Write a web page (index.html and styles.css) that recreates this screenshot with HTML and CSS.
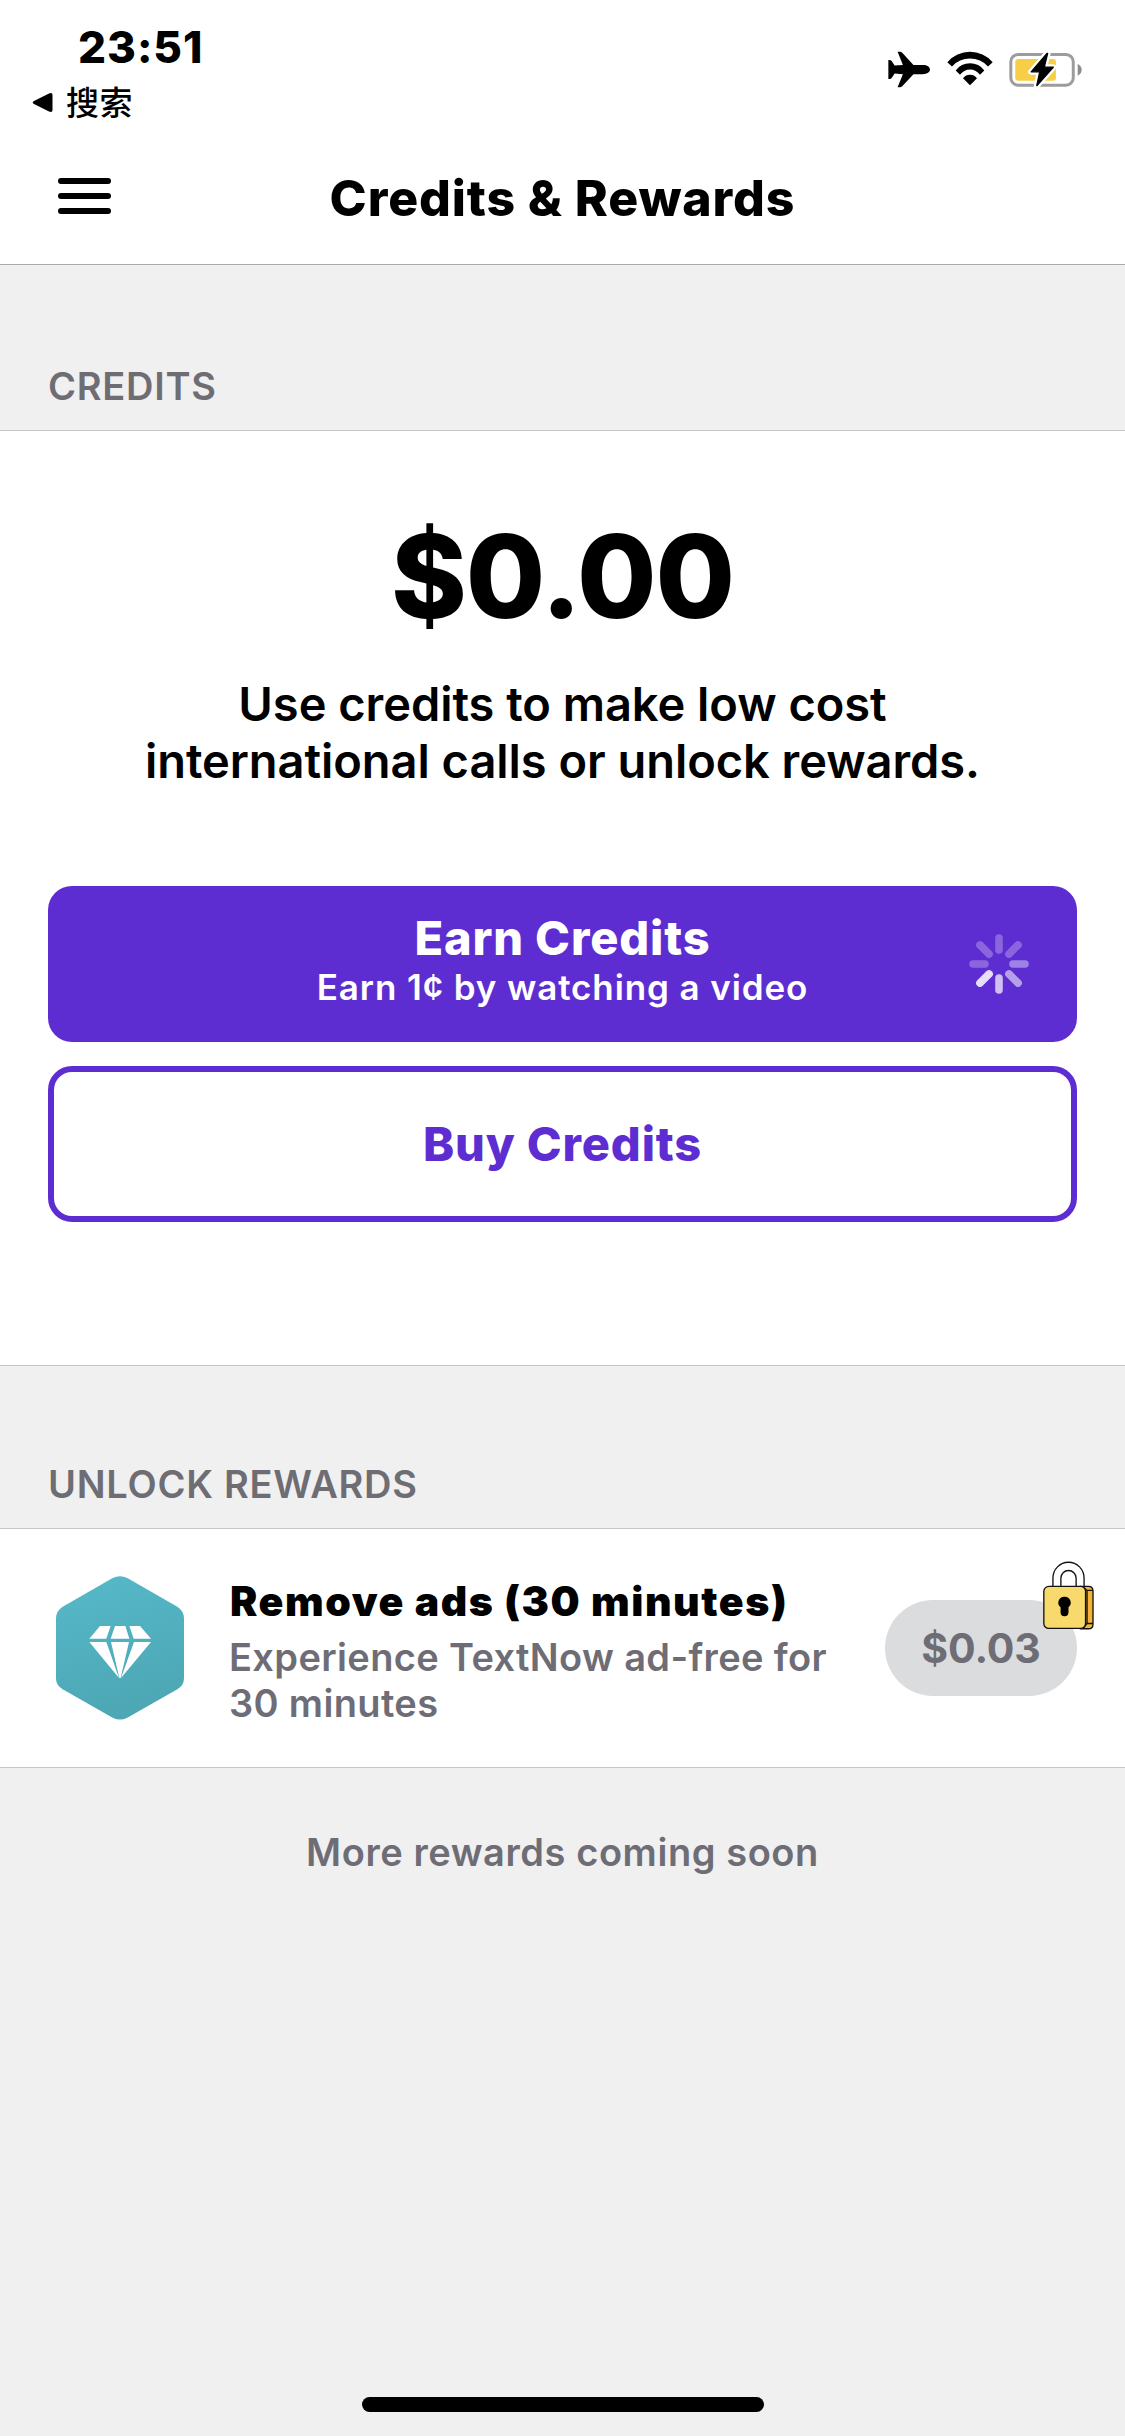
FILE: index.html
```html
<!DOCTYPE html>
<html lang="en">
<head>
<meta charset="utf-8">
<title>Credits &amp; Rewards</title>
<link rel="stylesheet" href="styles.css">
</head>
<body>
<div class="screen">
  <header class="status">
    <div class="status-left">
      <div class="time">23:51</div>
      <div class="back">
        <svg class="back-arrow" viewBox="0 0 21 21"><path d="M2 9 L17 1.4 Q20.5 0 20.5 3 V18 Q20.5 21 17 19.6 L2 12 Q-.5 10.500 2 9Z"/></svg>
        <span lang="zh-CN">搜索</span>
      </div>
    </div>
    <div class="status-icons">
      <svg class="plane" viewBox="84 63 128 112"><path d="M210 119c0-8-8-14-22-14H160L126 68Q123 65 118 65H112L128 105 103 107 94 93Q92 90 86 90H84V148H88Q92 148 94 145L103 131 128 133 112 173H118Q123 173 126 170L160 133H188c14 0 22-6 22-14Z"/></svg>
      <svg class="wifi" viewBox="261 63 138 104"><path d="M262 96A90 90 0 0 1 398 96L384 109A73 73 0 0 0 276 109ZM287 121A53 53 0 0 1 373 121L360 134A36 36 0 0 0 300 134ZM309 144A27 27 0 0 1 351 144L330 165Z"/></svg>
      <svg class="battery" viewBox="447 60 222 112">
        <rect x="451.500" y="70.500" width="189" height="93" rx="22" fill="none" stroke="#9c9c9c" stroke-width="9"/>
        <rect x="465" y="84" width="123" height="66" rx="9" fill="#f7ce46"/>
        <path d="M654 99Q666 105 666 117T654 135Z" fill="#8c8c8c"/>
        <path d="M561 67 513 123H539L530 165 580 109H553L563 67Z" fill="#fff" stroke="#fff" stroke-width="18" stroke-linejoin="round"/>
        <path d="M561 67 513 123H539L530 165 580 109H553L563 67Z" stroke="#000" stroke-width="4" stroke-linejoin="round"/>
      </svg>
    </div>
  </header>

  <nav class="navbar">
    <div class="menu"><i></i><i></i><i></i></div>
    <h1>Credits &amp; Rewards</h1>
  </nav>

  <h2 class="section-title first">CREDITS</h2>
  <section class="credits">
    <div class="amount">$0.00</div>
    <p class="blurb">Use credits to make low cost<br>international calls or unlock rewards.</p>
    <div class="actions">
      <div class="button primary">
        <div class="button-label">Earn Credits</div>
        <div class="button-note">Earn 1¢ by watching a video</div>
        <svg class="spinner" viewBox="-31 -31 62 62" stroke="#fff" stroke-width="7.600" stroke-linecap="round">
          <path d="M0-26V-14" opacity=".27"/>
          <path d="M19-19 10-10" opacity=".27"/>
          <path d="M26 0H14" opacity=".4"/>
          <path d="M19 19 10 10" opacity=".55"/>
          <path d="M0 26V14" opacity=".7"/>
          <path d="M-19 19-10 10" opacity=".85"/>
          <path d="M-26 0H-14" opacity=".27"/>
          <path d="M-19-19-10-10" opacity=".27"/>
        </svg>
      </div>
      <div class="button outline"><div class="button-label">Buy Credits</div></div>
    </div>
  </section>

  <h2 class="section-title">UNLOCK REWARDS</h2>
  <section class="reward">
    <svg class="reward-icon" viewBox="168 678 384 432">
      <defs><linearGradient id="teal" x1="0" y1="0" x2="0.250" y2="1"><stop offset="0" stop-color="#56b9c9"/><stop offset="1" stop-color="#4da7b5"/></linearGradient></defs>
      <path fill="url(#teal)" d="M338 684Q360 673 382 684L532 770Q552 783 552 805V985Q552 1006 532 1018L382 1103Q360 1114 338 1103L188 1018Q168 1006 168 985V805Q168 783 188 770Z"/>
      <path fill="#fff" d="M300 828H332L319 866H268ZM345 828H376L388 866H332ZM388 828H420L453 866H401ZM268 876H319L357 984ZM333 876H387L362 984H358ZM402 876H453L363 984Z"/>
    </svg>
    <div class="reward-text">
      <h3>Remove ads (30 minutes)</h3>
      <p>Experience TextNow ad-free for<br>30 minutes</p>
    </div>
    <div class="price">$0.03
      <svg class="lock" viewBox="547 63 154 207" stroke="#111" stroke-width="4">
        <path fill="#fff" d="M577 142V114A47 48 0 0 1 671 114V142H647V114A23 23 0 0 0 601 114V142Z"/>
        <path fill="#f5b335" d="M660 139H684Q698 139 698 153V253Q698 267 684 267H660Z"/>
        <path fill="none" d="M668 140 680 151H698M668 266 680 251H698M680 151V251"/>
        <rect x="549.500" y="139" width="126" height="127" rx="15" fill="#f8da6c"/>
        <path stroke="none" fill="#000" d="M612 170A18 18 0 0 1 624 202V217A12 12 0 0 1 600 217V202A18 18 0 0 1 612 170Z"/>
      </svg>
    </div>
  </section>

  <p class="more">More rewards coming soon</p>
  <div class="home"></div>
</div>
</body>
</html>
```
FILE: styles.css
```css
* { box-sizing: border-box; }
body, h1, h2, h3, p { margin: 0; }
body { background: #f0f0f0; color: #000; font-family: Inter, "Noto Sans CJK SC", sans-serif; }
svg { display: block; overflow: visible; }

.screen { width: 1125px; height: 2436px; display: flex; flex-direction: column; }

.status { height: 132px; flex: none; display: flex; justify-content: space-between; background: #fff; }
.status-left { padding: 20px 0 0 32px; }
.time { padding-left: 46px; font-size: 44px; line-height: 54px; font-weight: 800; letter-spacing: 0.96px; }
.back { margin-top: 8px; height: 40px; display: flex; align-items: center; gap: 13px; }
.back span { margin-top: -2px; font: 500 33px/40px "Noto Sans CJK SC", sans-serif; letter-spacing: 0.5px; }
.back-arrow { width: 21px; height: 21px; }
.status-icons { display: flex; align-items: flex-start; padding: 51px 42px 0 0; }
.plane { width: 43px; height: 37px; margin-right: 16px; }
.wifi { width: 46px; height: 35px; margin-right: 16px; }
.battery { width: 74px; height: 37px; }

.navbar { height: 133px; flex: none; display: grid; grid-template-columns: 111px 1fr 111px; align-items: center; background: #fff; border-bottom: 1px solid #a9a9ab; }
.menu { display: grid; gap: 9px; padding-left: 58px; margin-top: -4px; }
.menu i { height: 6px; border-radius: 3px; background: #000; }
h1 { font-size: 50px; line-height: 60px; font-weight: 800; letter-spacing: 0.88px; text-align: center; }

.section-title { height: 163px; flex: none; display: flex; align-items: flex-end; padding: 0 48px 21px; border-bottom: 1px solid #c5c5c8; color: #6e6d73; font-size: 38px; line-height: 46px; font-weight: 600; letter-spacing: 0.74px; }
.section-title.first { height: 166px; }

.credits { height: 935px; flex: none; padding: 76px 48px 0; background: #fff; border-bottom: 1px solid #c5c5c8; text-align: center; }
.amount { font-size: 115px; line-height: 140px; font-weight: 800; letter-spacing: -0.97px; }
.blurb { margin-top: 28px; font-size: 47px; line-height: 57px; font-weight: 600; letter-spacing: -0.04px; }
.actions { margin-top: 97px; display: grid; gap: 24px; }
.button { position: relative; height: 156px; border-radius: 24px; display: flex; flex-direction: column; align-items: center; justify-content: center; }
.primary { background: #5e2dd2; color: #fff; padding-bottom: 10px; }
.outline { border: 6px solid #5e2dd2; color: #5e2dd2; }
.button-label { font-size: 47px; line-height: 56px; font-weight: 800; letter-spacing: 0.84px; }
.button-note { font-size: 35px; line-height: 42px; font-weight: 600; letter-spacing: 0.9px; }
.spinner { position: absolute; right: 47px; top: 47px; width: 62px; height: 62px; }

.reward { height: 239px; flex: none; display: flex; align-items: center; padding: 0 48px 0 56px; background: #fff; border-bottom: 1px solid #c5c5c8; }
.reward-icon { width: 128px; height: 144px; }
.reward-text { flex: 1; align-self: flex-start; padding: 47px 0 0 45px; white-space: nowrap; }
h3 { padding-left: 1px; font-size: 41px; line-height: 50px; font-weight: 900; letter-spacing: 1.56px; }
.reward-text p { margin-top: 8px; font-size: 38px; line-height: 46px; font-weight: 600; letter-spacing: 0.35px; color: #6e6d76; }
.price { position: relative; width: 192px; height: 96px; border-radius: 48px; display: flex; align-items: center; justify-content: center; background: #dbdcde; color: #6e6d76; font-size: 41px; font-weight: 700; letter-spacing: -0.1px; }
.lock { position: absolute; right: -17px; top: -39px; width: 51px; height: 69px; }

.more { padding-top: 61px; font-size: 38px; line-height: 46px; font-weight: 600; letter-spacing: 0.57px; color: #6e6d76; text-align: center; }
.home { width: 402px; height: 15px; margin: auto auto 24px; border-radius: 8px; background: #000; }
```
